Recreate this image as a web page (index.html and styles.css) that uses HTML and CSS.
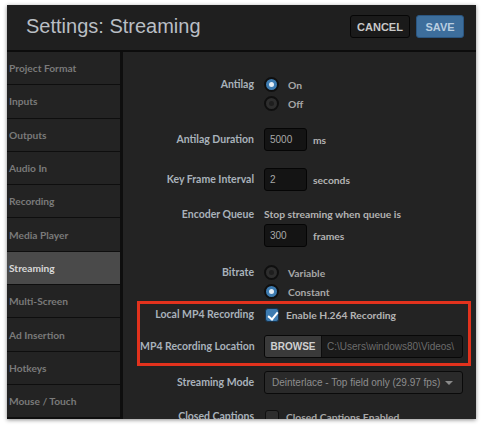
FILE: index.html
```html
<!DOCTYPE html>
<html lang="en">
<head>
    <meta charset="UTF-8">
    <title>Settings: Streaming</title>
    <link rel="stylesheet" href="styles.css">
</head>
<body>
    <div class="window">
        <header class="top-bar">
            <h1 class="title">Settings: Streaming</h1>
            <div class="top-actions">
                <button class="btn btn-cancel">CANCEL</button>
                <button class="btn btn-save">SAVE</button>
            </div>
        </header>

        <div class="content">
            <nav class="side-menu">
                <a class="menu-item">Project Format</a>
                <a class="menu-item">Inputs</a>
                <a class="menu-item">Outputs</a>
                <a class="menu-item">Audio In</a>
                <a class="menu-item">Recording</a>
                <a class="menu-item">Media Player</a>
                <a class="menu-item active">Streaming</a>
                <a class="menu-item">Multi-Screen</a>
                <a class="menu-item">Ad Insertion</a>
                <a class="menu-item">Hotkeys</a>
                <a class="menu-item">Mouse / Touch</a>
            </nav>

            <main class="panel">
                <div class="row row-antilag">
                    <div class="label">Antilag</div>
                    <div class="field">
                        <label class="radio-line"><span class="radio checked"></span>On</label>
                        <label class="radio-line"><span class="radio"></span>Off</label>
                    </div>
                </div>

                <div class="row row-duration">
                    <div class="label">Antilag Duration</div>
                    <div class="field inline">
                        <span class="text-box">5000</span>
                        <span class="unit">ms</span>
                    </div>
                </div>

                <div class="row row-keyframe">
                    <div class="label">Key Frame Interval</div>
                    <div class="field inline">
                        <span class="text-box">2</span>
                        <span class="unit">seconds</span>
                    </div>
                </div>

                <div class="row row-queue">
                    <div class="label">Encoder Queue</div>
                    <div class="field">
                        <div class="note">Stop streaming when queue is</div>
                        <div class="inline">
                            <span class="text-box">300</span>
                            <span class="unit">frames</span>
                        </div>
                    </div>
                </div>

                <div class="row row-bitrate">
                    <div class="label">Bitrate</div>
                    <div class="field">
                        <label class="radio-line"><span class="radio"></span>Variable</label>
                        <label class="radio-line"><span class="radio checked"></span>Constant</label>
                    </div>
                </div>

                <div class="highlight">
                    <div class="row row-mp4">
                        <div class="label">Local MP4 Recording</div>
                        <div class="field inline">
                            <span class="check checked"></span>
                            <span class="check-text">Enable H.264 Recording</span>
                        </div>
                    </div>
                    <div class="row row-location">
                        <div class="label">MP4 Recording Location</div>
                        <div class="field">
                            <div class="path-box">
                                <button class="browse">BROWSE</button>
                                <span class="path">C:\Users\windows80\Videos\</span>
                            </div>
                        </div>
                    </div>
                </div>

                <div class="row row-mode">
                    <div class="label">Streaming Mode</div>
                    <div class="field">
                        <div class="select">
                            <span>Deinterlace - Top field only (29.97 fps)</span>
                            <span class="caret"></span>
                        </div>
                    </div>
                </div>

                <div class="row row-captions">
                    <div class="label">Closed Captions</div>
                    <div class="field inline">
                        <span class="check"></span>
                        <span class="check-text">Closed Captions Enabled</span>
                    </div>
                </div>
            </main>
        </div>
    </div>
</body>
</html>
```

FILE: styles.css
```css
* {
    margin: 0;
    padding: 0;
    box-sizing: border-box;
}

body {
    background: #fff;
    font-family: 'Liberation Sans', Arial, sans-serif;
    width: 483px;
    height: 428px;
    overflow: hidden;
}

.window {
    margin: 5px 0 0 7px;
    width: 469px;
    height: 414px;
    background: #1f1f1f;
    box-shadow: 0 1px 4px rgba(0,0,0,0.45);
    overflow: hidden;
    display: flex;
    flex-direction: column;
}

/* header */
.top-bar {
    height: 47px;
    flex-shrink: 0;
    display: flex;
    align-items: center;
    justify-content: space-between;
    padding: 0 12px 2px 19px;
    border-bottom: 2px solid #0c0c0c;
}

.title {
    font-weight: normal;
    font-size: 20px;
    color: #b9bec4;
}

.top-actions {
    display: flex;
    gap: 6px;
}

.btn {
    height: 23px;
    border-radius: 3px;
    font-family: 'Liberation Sans', Arial, sans-serif;
    font-weight: bold;
    font-size: 11px;
}

.btn-cancel {
    width: 60px;
    background: #1a1a1a;
    border: 1px solid #060606;
    color: #c8c8c8;
}

.btn-save {
    width: 48px;
    background: #3d6e9c;
    border: 1px solid #2a5580;
    color: #b8cde0;
}

/* body */
.content {
    flex: 1;
    display: flex;
    min-height: 0;
}

.side-menu {
    width: 116px;
    flex-shrink: 0;
    border-right: 3px solid #0e0e0e;
    background: #0e0e0e;
}

.menu-item {
    display: flex;
    align-items: center;
    height: 33.3px;
    padding-left: 2px;
    border-bottom: 1px solid #0e0e0e;
    background: #232323;
    color: #7a7a7a;
    font-family: Lato, 'Liberation Sans', sans-serif;
    font-weight: bold;
    font-size: 10.2px;
}

.menu-item.active {
    background: #4a4a4a;
    color: #d8d8d8;
}

/* form */
.panel {
    flex: 1;
    background: #232323;
    padding-top: 23px;
    font-family: Lato, 'Liberation Sans', sans-serif;
    font-size: 10.5px;
}

.row {
    display: flex;
}

.label {
    width: 141px;
    flex-shrink: 0;
    text-align: right;
    padding-right: 10px;
    font-weight: bold;
    color: #a9b2bb;
    line-height: 19px;
    white-space: nowrap;
}

.field {
    color: #b3b3b3;
    font-weight: bold;
    font-size: 10.3px;
}

.inline {
    display: flex;
    align-items: center;
}

.radio-line {
    display: flex;
    align-items: center;
    height: 19px;
    gap: 9px;
    color: #a7a7a7;
}

.radio {
    width: 15px;
    height: 15px;
    border-radius: 50%;
    background: #2e2e2e;
    border: 2px solid #0f0f0f;
    display: flex;
    align-items: center;
    justify-content: center;
}

.radio::after {
    content: "";
    width: 5px;
    height: 5px;
    border-radius: 50%;
    background: #1e1e1e;
}

.radio.checked {
    background: #3d7bb0;
}

.radio.checked::after {
    background: #e6eef5;
}

.text-box {
    display: flex;
    align-items: center;
    width: 43px;
    height: 23px;
    padding-left: 5px;
    background: #141414;
    border: 1px solid #050505;
    border-radius: 3px;
    color: #a8a8a8;
    font-family: 'Liberation Sans', Arial, sans-serif;
    font-size: 10px;
    font-weight: normal;
}

.unit {
    margin-left: 6px;
}

.row-duration { margin-top: 15px; }
.row-keyframe { margin-top: 17px; }
.row-keyframe .label, .row-duration .label { line-height: 23px; }

.row-queue { margin-top: 14px; }
.note {
    line-height: 18px;
    margin-bottom: 1px;
}

.row-bitrate { margin-top: 16px; }

/* red annotation box */
.highlight {
    margin: 0 5px 0 14px;
    border: 3px solid #e2321d;
    padding: 1px 0 5px;
}

.highlight .label {
    width: 124px;
}

.check {
    width: 14px;
    height: 14px;
    border-radius: 3px;
    background: #2e2e2e;
    border: 1px solid #0f0f0f;
    margin: 0 7px 0 1px;
    position: relative;
}

.check.checked {
    background: #3d7bb0;
    border-color: #16324c;
}

.check.checked::after {
    content: "";
    position: absolute;
    left: 4px;
    top: 1px;
    width: 4px;
    height: 8px;
    border: solid #fff;
    border-width: 0 2px 2px 0;
    transform: rotate(40deg);
}

.row-mp4 {
    height: 19px;
    align-items: center;
}

.row-location {
    margin-top: 11px;
}

.row-location .label,
.row-mode .label {
    line-height: 23px;
}

.path-box {
    display: flex;
    width: 199px;
    height: 23px;
    border: 1px solid #080808;
    border-radius: 3px;
    overflow: hidden;
    background: #1a1a1a;
}

.browse {
    width: 57px;
    border: none;
    border-right: 1px solid #0d0d0d;
    background: #3a3a3a;
    color: #d0d0d0;
    font-family: 'Liberation Sans', Arial, sans-serif;
    font-weight: bold;
    font-size: 10px;
}

.path {
    display: flex;
    align-items: center;
    padding-left: 5px;
    color: #6c6c6c;
    font-family: 'Liberation Sans', Arial, sans-serif;
    font-size: 10px;
    font-weight: normal;
}

.row-mode { margin-top: 5px; }

.select {
    display: flex;
    align-items: center;
    justify-content: space-between;
    width: 199px;
    height: 23px;
    padding: 0 9px 0 7px;
    background: #2a2a2a;
    border: 1px solid #0a0a0a;
    border-radius: 3px;
    color: #8e8e8e;
    font-family: 'Liberation Sans', Arial, sans-serif;
    font-size: 10px;
    font-weight: normal;
}

.caret {
    width: 0;
    height: 0;
    border-left: 4px solid transparent;
    border-right: 4px solid transparent;
    border-top: 4px solid #8a8a8a;
}

.row-captions {
    margin-top: 13px;
    height: 19px;
    align-items: center;
}

.row-captions .check-text {
    color: #a7a7a7;
}
```
